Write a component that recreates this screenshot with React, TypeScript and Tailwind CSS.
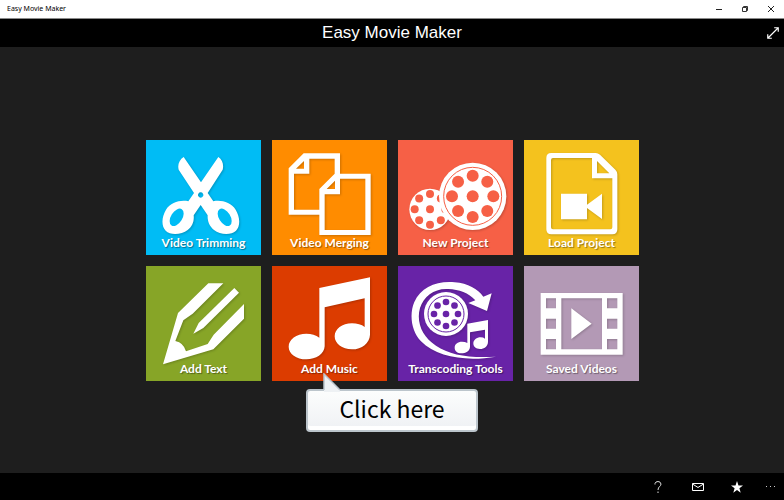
import React from "react";

type TileProps = {
  label: string;
  color: string;
  children: React.ReactNode;
};

function Tile({ label, color, children }: TileProps) {
  return (
    <button
      type="button"
      className={`relative flex aspect-square w-full flex-col justify-end pb-1 text-center font-['Lato',sans-serif] text-[12px] leading-4 font-bold text-white ${color}`}
    >
      <svg
        viewBox="18 17 345 345"
        className="absolute inset-0 size-full fill-white drop-shadow-[1px_1px_1px_rgba(0,0,0,0.2)]"
        aria-hidden="true"
      >
        {children}
      </svg>
      <span className="relative w-full whitespace-nowrap [text-shadow:1px_1px_1px_rgba(0,0,0,0.4)]">{label}</span>
    </button>
  );
}

type ReelProps = { cx: number; cy: number; r: number; orbit: number; hole: number; center: number; hub: string };

function Holes({ cx, cy, orbit, hole, center, hub }: ReelProps) {
  return (
    <g className={hub}>
      <circle cx={cx} cy={cy} r={center} />
      {[0, 45, 90, 135, 180, 225, 270, 315].map((a) => (
        <circle
          key={a}
          cx={cx + orbit * Math.cos((a * Math.PI) / 180)}
          cy={cy + orbit * Math.sin((a * Math.PI) / 180)}
          r={hole}
        />
      ))}
    </g>
  );
}

function Reel(props: ReelProps) {
  return (
    <>
      <circle cx={props.cx} cy={props.cy} r={props.r} />
      <Holes {...props} />
    </>
  );
}

function Scissors() {
  return (
    <>
      <path
        fillRule="evenodd"
        d="M131 68L183 144L235 68C247 76 252 91 248 106L203 176L220 201C244 196 273 204 287 226C300 247 302 276 288 289C272 304 240 301 222 287C206 275 202 256 203 243L182 212L161 243C163 260 157 277 143 287C125 301 91 304 77 289C63 276 65 247 78 226C92 204 121 196 145 201L162 176L116 106C112 91 118 76 131 68ZM182 174a8 8 0 1 0 0.1 0Z"
      />
      <g className="fill-[#00bcf5]">
        <ellipse cx="110" cy="249" rx="17" ry="29" transform="rotate(32 110 249)" />
        <ellipse cx="254" cy="249" rx="17" ry="29" transform="rotate(-32 254 249)" />
      </g>
    </>
  );
}

function Pages() {
  return (
    <path
      fillRule="evenodd"
      d="M113 57H222V118H314V302H160V241H68V102ZM130 73V118H84V226H160V164L206 118V73ZM114 80L90 103H114ZM222 133V180H176V287H298V133ZM207 139L182 164H207Z"
    />
  );
}

function Reels() {
  return (
    <>
      <Reel cx={114} cy={225} r={62} orbit={46} hole={12} center={12} hub="fill-[#f66046]" />
      <Reel cx={242} cy={186} r={101} orbit={62} hole={18} center={18} hub="fill-[#f66046]" />
      <circle cx="242" cy="186" r="87" className="fill-none stroke-[#f66046] stroke-3" />
    </>
  );
}

function VideoFile() {
  return (
    <>
      <path
        fillRule="evenodd"
        d="M100 56H233Q240 56 246 61L292 106Q298 112 298 120V285Q298 300 283 300H100Q85 300 85 285V71Q85 56 100 56ZM105 71Q99 71 99 77V279Q99 285 105 285H277Q283 285 283 279V132H222V71ZM237 80V117H274Z"
      />
      <path d="M129 178H207V211L252 178V254L207 221V255H129Z" />
    </>
  );
}

function Pencil() {
  return (
    <>
      <path d="M205 69H250L158 160L130 180L106 242Q131 247 138 273L203 251L221 223L312 131V175L220 267L69 312L114 158Z" />
      <path d="M283 83L297 97L190 203L160 220L176 188Z" />
    </>
  );
}

function Notes() {
  return (
    <path d="M160 83L312 51V223C311 248 288 267 258 267C228 267 206 250 206 228C206 206 228 189 258 189C273 189 287 193 296 200V114L176 141V258C175 281 150 297 121 297C91 297 68 281 68 259C68 237 91 220 121 220C136 220 150 224 160 232Z" />
  );
}

function Transcode() {
  return (
    <>
      <path d="M312 289C225 304 135 292 87 243C58 213 51 162 67 125C87 81 134 61 188 66C228 69 257 86 274 109L299 99L285 152L229 128L250 120C230 98 201 87 169 86C128 83 96 107 84 143C72 186 91 230 132 256C174 284 232 294 312 289Z" />
      <Reel cx={162} cy={161} r={66} orbit={36} hole={10} center={10} hub="fill-[#6823a7]" />
      <circle cx="162" cy="161" r="54" className="fill-none stroke-[#6823a7] stroke-3" />
      <path d="M226 190L288 179V245C287 259 277 266 264 266C251 266 244 259 244 249C244 239 254 231 266 231Q274 231 279 235V208L234 216V260C233 273 221 279 208 279C196 279 188 272 188 262C188 251 197 244 210 244Q219 244 226 248Z" />
    </>
  );
}

function Film() {
  return (
    <path
      fillRule="evenodd"
      d="M68 98H314V283H68ZM84 114V144H114V114ZM84 175V205H114V175ZM84 236V267H114V236ZM130 114V267H252V114ZM267 114V144H298V114ZM267 175V205H298V175ZM267 236V267H298V236ZM160 144L221 190L160 236Z"
    />
  );
}

function ClickHint() {
  return (
    <div className="pointer-events-none absolute top-[123px] left-[34px] z-10 w-[172px]">
      <div className="flex h-[43px] items-center justify-center rounded-[4px] border-2 border-[#bcc5cc] bg-linear-to-b from-[#fcfdfd] to-[#eff1f4] pb-1 font-['Noto_Sans_CJK_JP',sans-serif] text-[23px] leading-6 text-black shadow-[inset_0_-4px_0_#fff]">
        Click here
      </div>
      <svg viewBox="0 0 20 20" className="absolute -top-4 left-4 size-5" aria-hidden="true">
        <path d="M2 19V1L18 17V19Z" className="fill-[#eef1f4]" />
        <path d="M2 17V1L18 17" className="fill-none stroke-[#bcc5cc] stroke-[1.5]" />
      </svg>
    </div>
  );
}

export default function App() {
  return (
    <div className="flex min-h-screen flex-col bg-[#1e1e1e] font-['Liberation_Sans',Arial,sans-serif]">
      <div className="flex h-[19px] items-center justify-between border-b border-[#8a8a8a] bg-white pl-[7px] text-black">
        <span className="font-['Noto_Sans',sans-serif] text-[7px] leading-4">Easy Movie Maker</span>
        <div className="flex">
          <button type="button" aria-label="Minimize" className="flex h-[18px] w-[26px] items-center justify-center">
            <svg viewBox="0 0 8 8" className="size-2 fill-none stroke-[#222]">
              <path d="M1 4.5H7" />
            </svg>
          </button>
          <button type="button" aria-label="Restore" className="flex h-[18px] w-[26px] items-center justify-center">
            <svg viewBox="0 0 8 8" className="size-2 fill-none stroke-[#333]">
              <path d="M1.5 2.5H5.5V6.5H1.5ZM2.5 2.5V1.5H6.5V5.5H5.5" />
            </svg>
          </button>
          <button type="button" aria-label="Close" className="flex h-[18px] w-[26px] items-center justify-center">
            <svg viewBox="0 0 8 8" className="size-2 fill-none stroke-[#222]">
              <path d="M1 1L7 7M7 1L1 7" />
            </svg>
          </button>
        </div>
      </div>

      <header className="grid h-7 grid-cols-[1fr_auto_1fr] items-center bg-black px-[3px] text-white">
        <h1 className="col-start-2 text-[17px] leading-7">Easy Movie Maker</h1>
        <button type="button" aria-label="Full screen" className="flex size-4 items-center justify-center justify-self-end">
          <svg viewBox="0 0 12 12" className="size-3.5 fill-none stroke-white">
            <path d="M1.5 10.5L10.5 1.5M7 1.5H10.5V5M1.5 7V10.5H5" />
          </svg>
        </button>
      </header>

      <main className="flex flex-1 items-center justify-center pl-px">
        <div className="grid grid-cols-[repeat(4,115px)] gap-[11px]">
          <Tile label="Video Trimming" color="bg-[#00bcf5]"><Scissors /></Tile>
          <Tile label="Video Merging" color="bg-[#ff8c00]"><Pages /></Tile>
          <Tile label="New Project" color="bg-[#f66046]"><Reels /></Tile>
          <Tile label="Load Project" color="bg-[#f4c21e]"><VideoFile /></Tile>
          <Tile label="Add Text" color="bg-[#87a527]"><Pencil /></Tile>
          <div className="relative">
            <Tile label="Add Music" color="bg-[#dc3c00]"><Notes /></Tile>
            <ClickHint />
          </div>
          <Tile label="Transcoding Tools" color="bg-[#6823a7]"><Transcode /></Tile>
          <Tile label="Saved Videos" color="bg-[#b399b5]"><Film /></Tile>
        </div>
      </main>

      <footer className="flex h-[27px] items-center justify-end bg-black text-white">
        <button type="button" aria-label="Help" className="flex h-6 w-10 items-center justify-center">
          <svg viewBox="0 0 12 14" className="h-3.5 w-3 fill-none stroke-[#ddd]">
            <path d="M3 4.5V3.5Q3.5 1.5 6 1.5T9 4C9 6.5 6 6.5 6 10M6 11.5V13" />
          </svg>
        </button>
        <button type="button" aria-label="Mail" className="flex h-6 w-10 items-center justify-center">
          <svg viewBox="0 0 12 10" className="h-2.5 w-3 fill-none stroke-white">
            <path d="M0.5 1.5H11.5V8.5H0.5ZM0.5 2L6 5.5L11.5 2" />
          </svg>
        </button>
        <button type="button" aria-label="Rate" className="flex h-6 w-[38px] items-center justify-center">
          <svg viewBox="0 0 12 12" className="size-3 fill-white">
            <path d="M6 0L7.5 4.4H12L8.4 7.2L9.7 11.7L6 9L2.3 11.7L3.6 7.2L0 4.4H4.5Z" />
          </svg>
        </button>
        <button type="button" aria-label="More" className="flex h-6 w-7 items-center justify-center">
          <svg viewBox="0 0 10 4" className="h-1 w-2.5 fill-[#ccc]">
            <path d="M1 1H2V2H1ZM5 1H6V2H5ZM9 1H10V2H9Z" />
          </svg>
        </button>
      </footer>
    </div>
  );
}
